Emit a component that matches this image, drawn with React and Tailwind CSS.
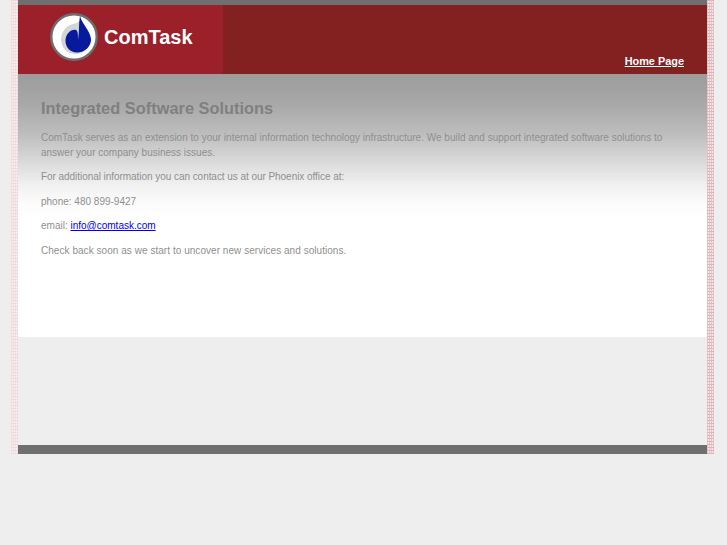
import React from 'react'

function Logo() {
  return (
    <svg width="48" height="48" viewBox="0 0 48 48" className="shrink-0">
      <circle cx="24" cy="24" r="22.7" fill="#fff" stroke="#6e6e70" strokeWidth="2.4" />
      <path d="M30 8 C 27 10 25 11 23 11 C 15 13 11 20 11 27 C 12 36 18 41 25 41 C 34 41 40 35 40 27 C 40 20 34 14 30 8 Z" fill="#d3d4d6" />
      <path d="M30 3 C 32 11 40 17 41 26 C 41.5 33 35 39.5 27 39.5 C 20 39.5 15.5 34 15.5 28 C 15.5 21 21 16 26 17 C 28 18 28 21 28 27 C 29.5 18 28.5 10 30 3 Z" fill="#071a9c" />
    </svg>
  )
}

export default function App() {
  return (
    <div className="min-h-[545px] bg-[#eeeeee] font-['Liberation_Sans',Arial,sans-serif]">
      <div className="ml-[11px] flex h-[454px] w-[703px]">
        <div className="w-[7px] bg-[#f7eff0] bg-[repeating-linear-gradient(0deg,#efd9dc_0px,#efd9dc_1px,transparent_1px,transparent_3px),repeating-linear-gradient(90deg,#f1dfe1_0px,#f1dfe1_1px,transparent_1px,transparent_2px)]" />
        <div className="flex w-[689px] flex-col">
          <div className="h-[5px] bg-[#6f6f6f]" />
          <header className="flex h-[69px] bg-[#832020]">
            <div className="flex w-[205px] items-center gap-[6px] bg-[#9c2029] pb-[6px] pl-[32px]">
              <Logo />
              <span className="text-[20px] font-bold text-white">ComTask</span>
            </div>
            <div className="flex flex-1 items-end justify-end pb-[5px] pr-[23px]">
              <a href="#" className="text-[10.9px] leading-[15px] font-bold text-white underline">Home Page</a>
            </div>
          </header>
          <main className="h-[263px] bg-white bg-[linear-gradient(to_bottom,#9c9c9c_0px,#a8a8a8_30px,#bdbdbd_60px,#dcdcdc_90px,#f0f0f0_110px,#fcfcfc_130px,#ffffff_145px)] pl-[23px] pr-[40px] pt-[23px] text-[10px] leading-[15px] text-[#8f8f8f]">
            <h1 className="mb-[11px] text-[16.4px] font-bold leading-[22px] text-[#808080]">Integrated Software Solutions</h1>
            <p className="mb-[9px]">ComTask serves as an extension to your internal information technology infrastructure. We build and support integrated software solutions to answer your company business issues.</p>
            <p className="mb-[9.5px] tracking-[-0.05px]">For additional information you can contact us at our Phoenix office at:</p>
            <p className="mb-[9.5px]">phone: 480 899-9427</p>
            <p className="mb-[9.5px]">email: <a href="#" className="text-[#0000ee] underline">info@comtask.com</a></p>
            <p className="tracking-[0.045px]">Check back soon as we start to uncover new services and solutions.</p>
          </main>
          <div className="flex-1" />
          <div className="h-[9px] bg-[#6f6f6f]" />
        </div>
        <div className="w-[7px] bg-[#f5e6e8] bg-[repeating-linear-gradient(0deg,#dfb4ba_0px,#dfb4ba_1px,transparent_1px,transparent_3px),repeating-linear-gradient(90deg,#e6c6ca_0px,#e6c6ca_1px,transparent_1px,transparent_2px)]" />
      </div>
    </div>
  )
}
